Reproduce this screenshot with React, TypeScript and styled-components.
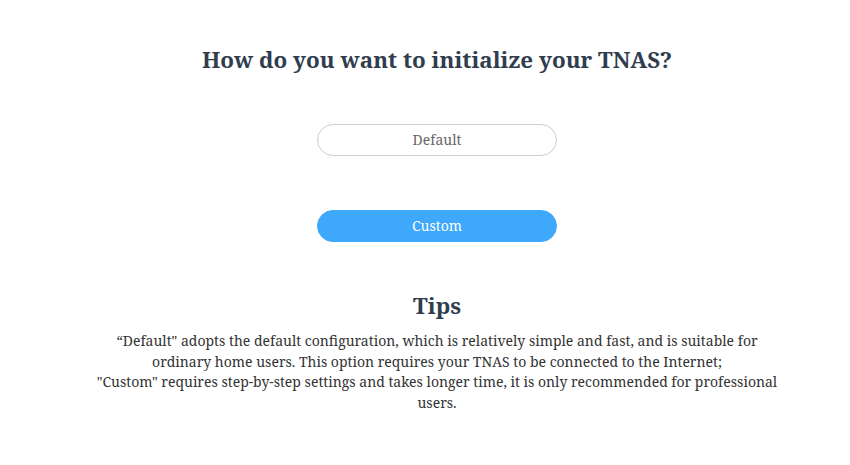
import React from "react";
import styled, { createGlobalStyle } from "styled-components";

const Global = createGlobalStyle`
  html, body { margin: 0; padding: 0; background: #fff; }
  body { font-family: "Noto Serif", "DejaVu Serif", serif; }
`;

const Page = styled.div`
  width: 850px;
  height: 465px;
  box-sizing: border-box;
  padding: 44px 0 0 24px;
  display: flex;
  flex-direction: column;
  align-items: center;
`;

const Title = styled.h1`
  margin: 0;
  font-size: 22.4px;
  font-weight: 700;
  color: #2f3d4e;
  line-height: 32px;
`;

const Buttons = styled.div`
  margin-top: 48px;
  display: flex;
  flex-direction: column;
  gap: 54px;
`;

const Choice = styled.button<{ $primary?: boolean }>`
  width: 240px;
  height: 32px;
  padding: 0 0 2px;
  border-radius: 16px;
  box-sizing: border-box;
  font-family: inherit;
  font-size: 14px;
  cursor: pointer;
  border: 1px solid ${(p) => (p.$primary ? "#3ea8fb" : "#cfcfcf")};
  background: ${(p) => (p.$primary ? "#3ea8fb" : "#fff")};
  color: ${(p) => (p.$primary ? "#fff" : "#666")};
`;

const TipsTitle = styled.h2`
  margin: 48px 0 0;
  font-size: 22.5px;
  font-weight: 700;
  color: #2f3d4e;
  line-height: 32px;
`;

const TipsText = styled.p`
  margin: 9px 0 0;
  width: 690px;
  text-align: center;
  font-size: 14px;
  line-height: 20.5px;
  color: #333;
`;

export default function App() {
  return (
    <>
      <Global />
      <Page>
        <Title>How do you want to initialize your TNAS?</Title>
        <Buttons>
          <Choice>Default</Choice>
          <Choice $primary>Custom</Choice>
        </Buttons>
        <TipsTitle>Tips</TipsTitle>
        <TipsText>
          “Default" adopts the default configuration, which is relatively simple and fast, and is suitable for ordinary home users. This option requires your TNAS to be connected to the Internet;
          <br />
          "Custom" requires step-by-step settings and takes longer time, it is only recommended for professional users.
        </TipsText>
      </Page>
    </>
  );
}
